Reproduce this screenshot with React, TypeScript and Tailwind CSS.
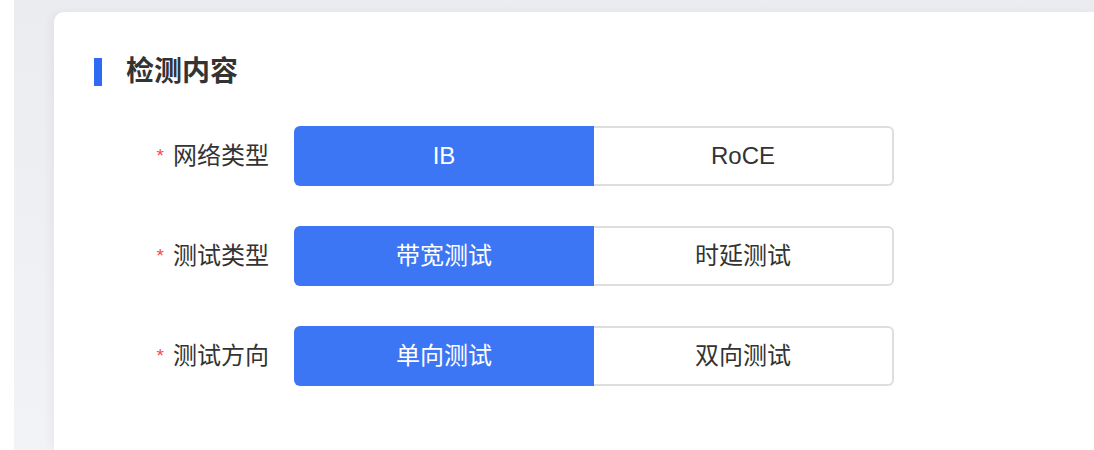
const rows = [
  { label: "网络类型", options: ["IB", "RoCE"] },
  { label: "测试类型", options: ["带宽测试", "时延测试"] },
  { label: "测试方向", options: ["单向测试", "双向测试"] },
];

function Segmented({ options }: { options: string[] }) {
  return (
    <div className="flex">
      {options.map((opt, i) => (
        <button
          key={opt}
          className={
            i === 0
              ? "flex h-[60px] w-[300px] items-center justify-center rounded-l-[6px] bg-[#3d76f5] text-[24px] text-white"
              : "flex h-[60px] w-[300px] items-center justify-center rounded-r-[6px] border-2 border-l-0 border-[#dedede] bg-white text-[24px] text-[#333]"
          }
        >
          {opt}
        </button>
      ))}
    </div>
  );
}

export default function App() {
  return (
    <div
      className="h-[450px] w-[1094px] overflow-hidden bg-white pl-[14px]"
      style={{ fontFamily: '"Liberation Sans", "Noto Sans CJK SC", sans-serif' }}
    >
      <div className="h-full bg-gradient-to-b from-[#ebecf0] to-[#f2f3f6] pl-[40px] pt-[12px]">
        <div className="h-full rounded-tl-[10px] bg-white pl-[40px] pt-[46px] shadow-[-4px_0_10px_rgba(0,0,0,0.04)]">
          <div className="flex h-[28px] items-center gap-[24px]">
            <span className="h-[28px] w-[8px] bg-[#2f6bf2]" />
            <h2 className="text-[28px] font-semibold leading-none text-[#333]">检测内容</h2>
          </div>

          <div className="mt-[40px] flex flex-col gap-[40px]">
            {rows.map((row) => (
              <div key={row.label} className="flex items-center">
                <div className="flex w-[175px] items-center justify-end text-[24px] text-[#333]">
                  <span className="mr-[9px] text-[19px] text-[#f5484a]">*</span>
                  {row.label}
                </div>
                <div className="ml-[25px]">
                  <Segmented options={row.options} />
                </div>
              </div>
            ))}
          </div>
        </div>
      </div>
    </div>
  );
}
